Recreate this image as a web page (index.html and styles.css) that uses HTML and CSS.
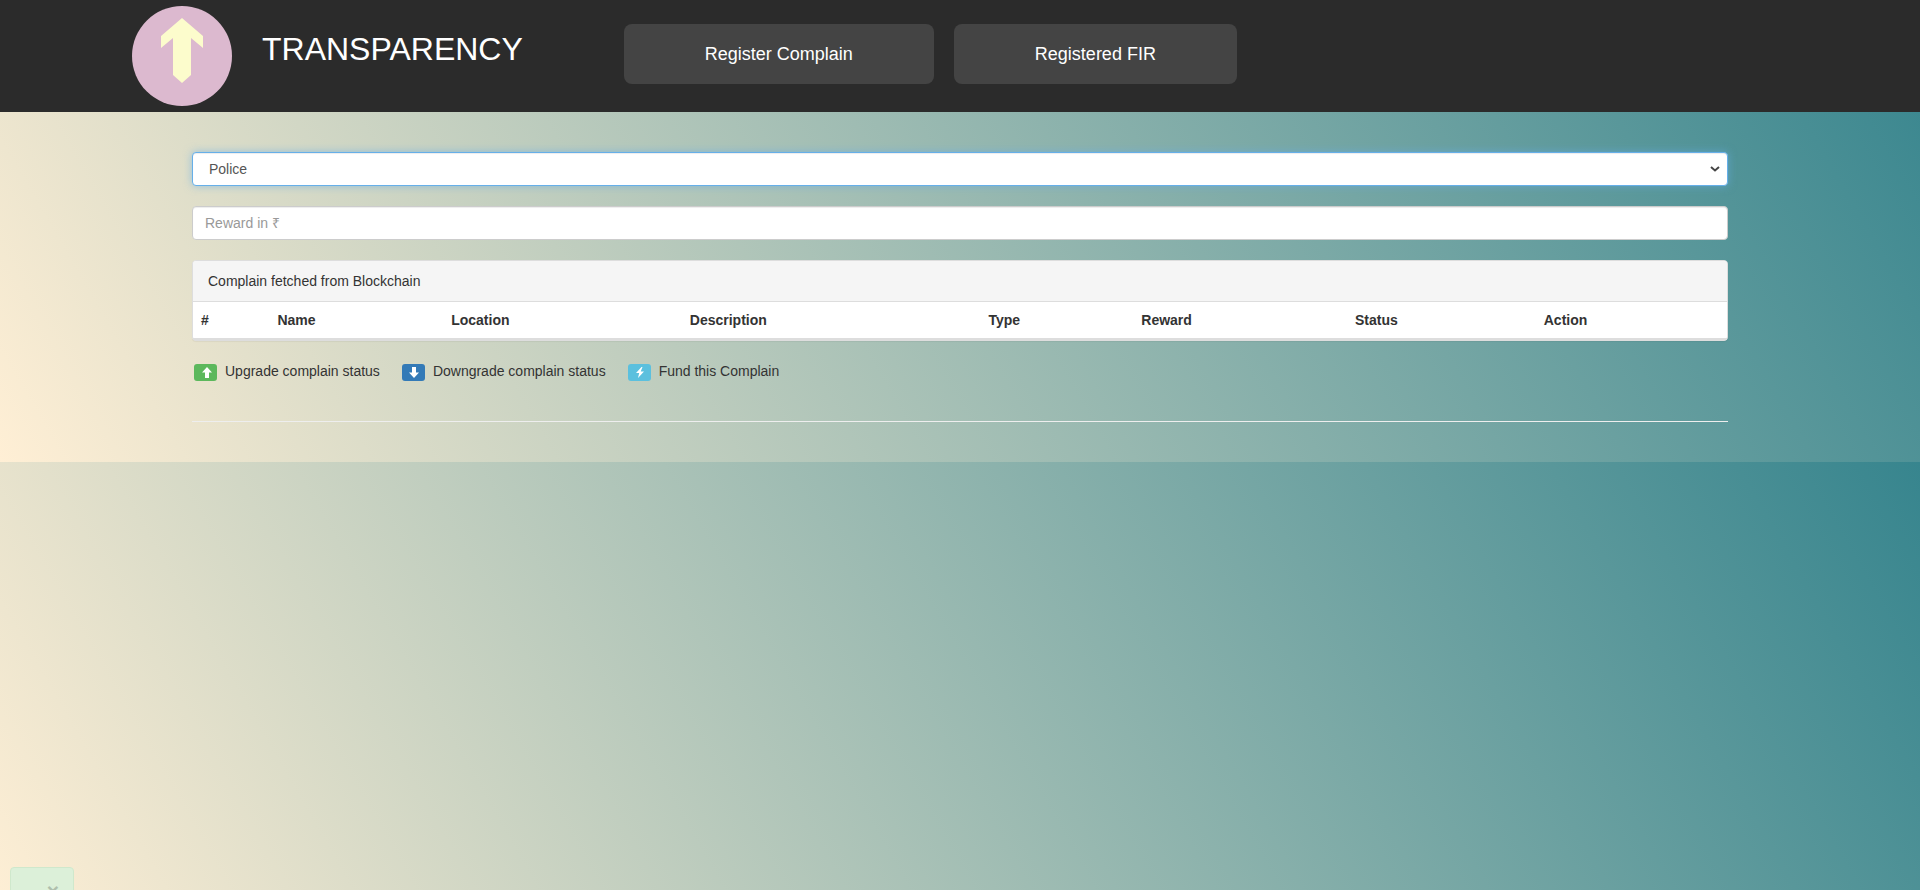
FILE: index.html
```html
<!DOCTYPE html>
<html lang="en">
<head>
<meta charset="utf-8">
<title>Transparency</title>
<link rel="stylesheet" href="styles.css">
</head>
<body>
<header class="site-header">
  <svg class="logo" viewBox="0 0 100 100" aria-hidden="true">
    <circle cx="50" cy="50" r="50" fill="#dcb9cf"/>
    <path d="M50 12 71 30V42L59 32V69L50 77 41 69V32L29 42V30Z" fill="#fcfccc"/>
  </svg>
  <h1 class="site-title">TRANSPARENCY</h1>
  <nav class="site-nav">
    <a class="nav-link" href="#register">Register Complain</a>
    <a class="nav-link" href="#fir">Registered FIR</a>
  </nav>
</header>
<main class="content">
  <div class="select-wrap">
    <select class="form-control form-select" aria-label="Account">
      <option>Police</option>
    </select>
    <svg class="select-arrow" viewBox="0 0 10 6" aria-hidden="true"><path d="M1 1 5 4.500 9 1"/></svg>
  </div>
  <input class="form-control" type="text" placeholder="Reward in ₹" aria-label="Reward in ₹">
  <section class="panel">
    <div class="panel-heading">Complain fetched from Blockchain</div>
    <table class="table">
      <thead>
        <tr>
          <th>#</th><th>Name</th><th>Location</th><th>Description</th>
          <th>Type</th><th>Reward</th><th>Status</th><th>Action</th>
        </tr>
      </thead>
    </table>
  </section>
  <div class="legend">
    <div class="legend-item">
      <button class="badge badge-up" type="button" aria-label="Upgrade">
        <svg class="glyph" viewBox="0 0 10 11"><path d="M5 0 10 5.500H7V11H3V5.500H0Z"/></svg>
      </button>
      <span>Upgrade complain status</span>
    </div>
    <div class="legend-item">
      <button class="badge badge-down" type="button" aria-label="Downgrade">
        <svg class="glyph" viewBox="0 0 10 11"><path d="M5 11 10 5.500H7V0H3V5.500H0Z"/></svg>
      </button>
      <span>Downgrade complain status</span>
    </div>
    <div class="legend-item">
      <button class="badge badge-fund" type="button" aria-label="Fund">
        <svg class="glyph" viewBox="0 0 10 11"><path d="M6.500 0 1 6H4.200L3 11 9 4.500H5.700L7.500 0Z"/></svg>
      </button>
      <span>Fund this Complain</span>
    </div>
  </div>
  <hr class="divider">
</main>
<div class="toast" role="status">
  <button class="toast-close" type="button" aria-label="Close">×</button>
</div>
</body>
</html>
```
FILE: styles.css
```css
* { box-sizing: border-box; }

body {
  margin: 0;
  font: 14px/20px "Liberation Sans", Arial, sans-serif;
  color: #333;
  background: linear-gradient(60deg, #ffefd5, #37858e);
}

.site-header {
  display: flex;
  align-items: center;
  padding: 6px 132px;
  background: #2b2b2b;
  color: #fff;
}

.logo { flex: none; width: 100px; height: 100px; }

.site-title {
  margin: 0 101px 14px 30px;
  font-size: 32px;
  font-weight: 400;
  line-height: 36px;
}

.site-nav { display: flex; gap: 20px; margin-bottom: 4px; }

.nav-link {
  padding: 20px 81px;
  border-radius: 8px;
  background: #444;
  color: #fff;
  font-size: 18px;
  line-height: 20px;
  text-decoration: none;
  white-space: nowrap;
}

.content {
  display: flex;
  flex-direction: column;
  gap: 20px;
  padding: 40px 10%;
}

.form-control {
  display: block;
  width: 100%;
  height: 34px;
  padding: 6px 12px;
  border: 1px solid #ccc;
  border-radius: 4px;
  background-color: #fff;
  box-shadow: inset 0 1px 1px rgba(0, 0, 0, .075);
  color: #555;
  font: inherit;
}

.form-control::placeholder { color: #999; opacity: 1; }

.select-wrap { position: relative; }

.form-select {
  appearance: none;
  padding: 6px 24px 6px 16px;
  border-color: #66afe9;
  outline: 0;
  box-shadow: inset 0 1px 1px rgba(0, 0, 0, .075), 0 0 8px rgba(102, 175, 233, .6);
}

.select-arrow {
  position: absolute;
  top: 14px;
  right: 8px;
  width: 10px;
  height: 6px;
  fill: none;
  stroke: #444;
  stroke-width: 2;
  pointer-events: none;
}

.panel {
  border: 1px solid #ddd;
  border-radius: 4px;
  background: #fff;
  box-shadow: 0 1px 1px rgba(0, 0, 0, .05);
}

.panel-heading {
  padding: 10px 15px;
  border-bottom: 1px solid #ddd;
  border-radius: 3px 3px 0 0;
  background: #f5f5f5;
}

.table { width: 100%; border-collapse: collapse; }

.table th {
  padding: 8px;
  border-bottom: 2px solid #ddd;
  text-align: left;
}

.legend { display: flex; gap: 22px; padding-left: 2px; }

.legend-item { display: flex; gap: 8px; }

.badge {
  display: flex;
  align-items: center;
  justify-content: center;
  width: 23px;
  height: 17px;
  margin: 3px 0 0;
  padding: 0 0 1px 2px;
  border: 0;
  border-radius: 3px;
}

.badge-up { background: #5cb85c; }
.badge-down { background: #337ab7; }
.badge-fund { background: #5bc0de; }

.glyph { width: 10px; height: 11px; fill: #fff; }

.divider {
  width: 100%;
  margin: 20px 0 0;
  border: 0;
  border-top: 1px solid #eee;
}

/* Notification, mostly slid out below the window edge */
.toast {
  position: fixed;
  left: 10px;
  bottom: -29px;
  width: 64px;
  height: 52px;
  padding: 12px 14px;
  border: 1px solid #cfe8cc;
  border-radius: 4px;
  background: #dcf0d9;
  text-align: right;
}

.toast-close {
  padding: 0;
  border: 0;
  background: none;
  color: #000;
  font: bold 21px/21px "Liberation Sans", Arial, sans-serif;
  opacity: .2;
}
```
